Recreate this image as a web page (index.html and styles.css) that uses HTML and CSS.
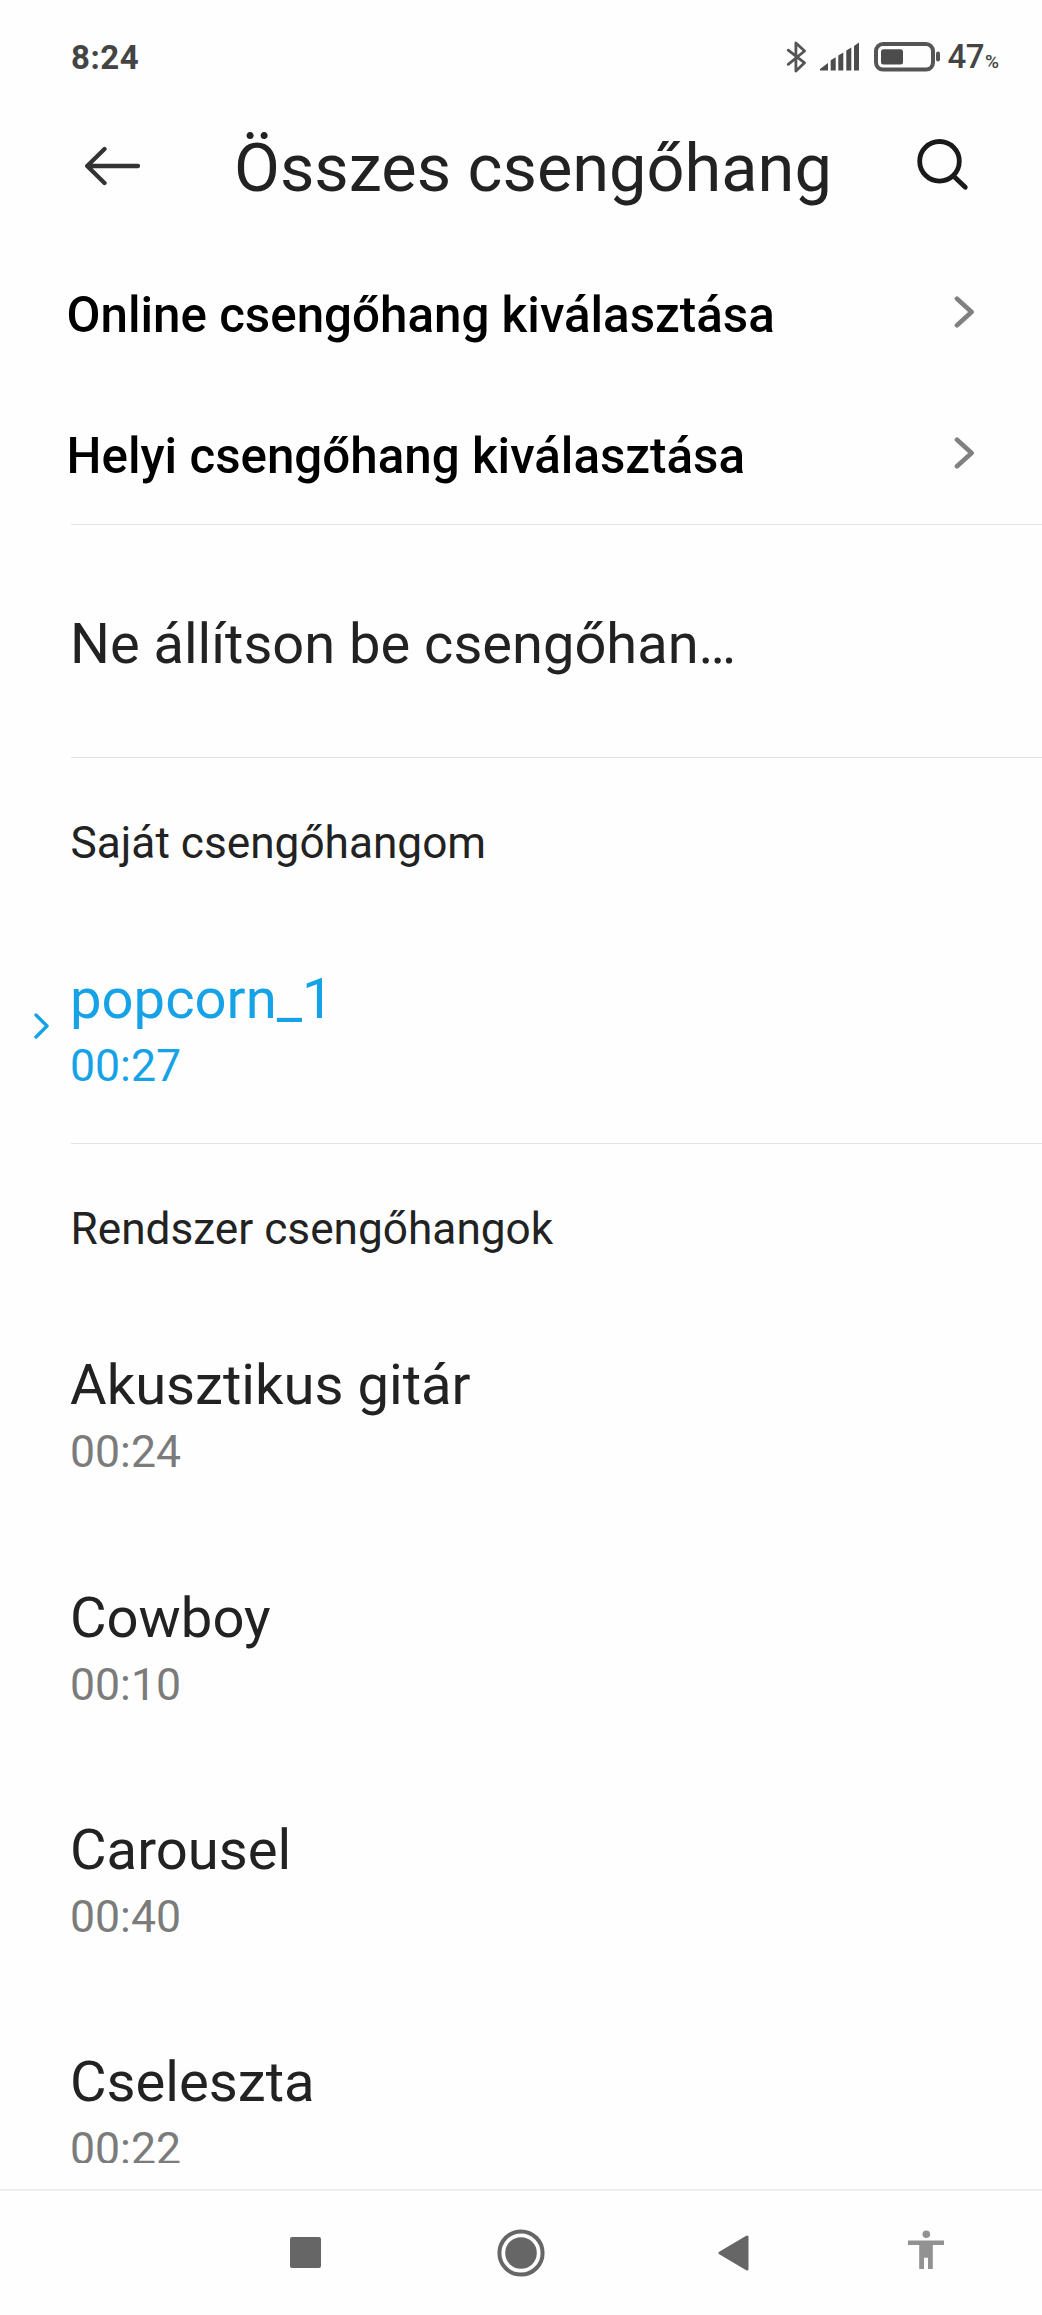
FILE: index.html
```html
<!DOCTYPE html>
<html lang="hu">
<head>
<meta charset="utf-8">
<title>Összes csengőhang</title>
<link rel="stylesheet" href="styles.css">
</head>
<body>
<div class="screen">
  <div class="status">
    <span class="clock">8:24</span>
    <div class="indicators">
      <svg class="bluetooth" width="22" height="34" viewBox="0 0 22 34" fill="none"><path d="M2.2 10.2 L18.6 22.8 L9.9 31 V3 L18.6 11 L2.2 24.3"/></svg>
      <svg class="signal" width="40" height="30" viewBox="0 0 40 30"><path d="M0 28.5 V27 L8 21 V28.5Z M10.7 28.5 V18.3 L15.7 15.3 V28.5Z M18.3 28.5 V13.5 L23.3 10.5 V28.5Z M26.3 28.5 V8.5 L31.3 5.5 V28.5Z M34 28.5 V4 L39 0.5 V28.5Z"/></svg>
      <svg class="battery" width="68" height="30" viewBox="0 0 68 30"><rect x="2" y="2" width="57" height="25.6" rx="7" fill="none" stroke="#555" stroke-width="4"/><rect x="7" y="7.3" width="22" height="15.3" rx="2.5" fill="#4c4c4c"/><rect x="62" y="9.5" width="4" height="10" rx="2" fill="#555"/></svg>
      <span class="level">47</span><span class="percent">%</span>
    </div>
  </div>

  <header class="appbar">
    <svg class="back" width="56" height="40" viewBox="0 0 56 40"><path d="M19.5 3 L2.2 20 L19.5 37 M2.2 20 H53"/></svg>
    <h1>Összes csengőhang</h1>
    <svg class="search" width="52" height="52" viewBox="0 0 52 52"><circle cx="22.5" cy="22.3" r="19.8"/><path d="M37 37.5 L48.3 48.3"/></svg>
  </header>

  <main class="content">
    <nav class="links">
      <a class="link">Online csengőhang kiválasztása<svg width="22" height="32" viewBox="0 0 22 32"><path d="M3 2.8 L17.6 16 L3 29.2"/></svg></a>
      <a class="link">Helyi csengőhang kiválasztása<svg width="22" height="32" viewBox="0 0 22 32"><path d="M3 2.8 L17.6 16 L3 29.2"/></svg></a>
    </nav>
    <div class="divider"></div>
    <div class="none">Ne állítson be csengőhan…</div>
    <div class="divider"></div>
    <h2>Saját csengőhangom</h2>
    <div class="tone selected">
      <svg class="marker" width="16" height="26" viewBox="0 0 16 26"><path d="M2 2 L13 13 L2 24"/></svg>
      <div class="name">popcorn_1</div><div class="time">00:27</div>
    </div>
    <div class="divider"></div>
    <h2>Rendszer csengőhangok</h2>
    <div class="tone"><div class="name">Akusztikus gitár</div><div class="time">00:24</div></div>
    <div class="tone"><div class="name">Cowboy</div><div class="time">00:10</div></div>
    <div class="tone"><div class="name">Carousel</div><div class="time">00:40</div></div>
    <div class="tone"><div class="name">Cseleszta</div><div class="time">00:22</div></div>
  </main>

  <footer class="navbar">
    <div class="key"><svg width="31" height="31" viewBox="0 0 31 31"><rect width="31" height="31" rx="2"/></svg></div>
    <div class="key"><svg width="48" height="48" viewBox="0 0 48 48"><circle cx="24" cy="24" r="21.6" fill="none" stroke="#666" stroke-width="4"/><circle cx="24" cy="24" r="15.8"/></svg></div>
    <div class="key back-key"><svg width="34" height="36" viewBox="0 0 34 36"><path d="M3 18 L30 2 V34Z" stroke="#666" stroke-width="3" stroke-linejoin="round"/></svg></div>
    <div class="key access"><svg width="36" height="40" viewBox="0 0 36 40"><circle cx="18.3" cy="4.3" r="3.8"/><path d="M0 10.5 H36 V15 H24.8 V39 H20 V27.7 H16 V39 H11.2 V15 H0Z"/></svg></div>
  </footer>
</div>
</body>
</html>
```

FILE: styles.css
```css
* { box-sizing: border-box; }
body { margin: 0; background: #fefefe; font-family: Roboto, "Noto Sans", sans-serif; color: #222; }
h1, h2 { margin: 0; font-weight: 400; }
svg { display: block; flex: none; }

.screen { width: 1042px; height: 2315px; display: flex; flex-direction: column; overflow: hidden; }

.status { height: 117px; flex: none; display: flex; align-items: center; justify-content: space-between; padding: 0 43px 0 71px; color: #444; }
.clock { font-size: 33px; font-weight: 700; letter-spacing: 0.5px; margin-bottom: 3px; }
.indicators { display: flex; align-items: center; }
.bluetooth { stroke: #555; stroke-width: 2.8; stroke-linejoin: round; stroke-linecap: round; margin: 0 12px 3px 0; }
.signal { fill: #4c4c4c; margin: 0 14px 3px 0; }
.battery { margin: 0 5px 4px 0; }
.level { font-size: 33px; font-weight: 500; line-height: 40px; margin-bottom: 3px; letter-spacing: -0.5px; }
.percent { font-size: 19px; font-weight: 500; line-height: 40px; margin: 7px 0 0 1px; }

.appbar { height: 101px; flex: none; display: flex; align-items: center; padding: 0 73px 0 85px; }
.back { fill: none; stroke: #333; stroke-width: 4.3; stroke-linecap: round; stroke-linejoin: round; margin-bottom: 4px; }
.appbar h1 { flex: 1; margin-left: 93px; font-size: 66.7px; line-height: 80px; white-space: nowrap; }
.search { fill: none; stroke: #1a1a1a; stroke-width: 4.8; stroke-linecap: round; margin-bottom: 5px; }

.content { height: 1945px; flex: none; overflow: hidden; }
.links { height: 306px; padding-top: 42px; display: flex; flex-direction: column; gap: 31px; }
.link { height: 110px; flex: none; display: flex; align-items: center; justify-content: space-between; padding: 0 66px 0 66.5px; font-size: 49.3px; font-weight: 500; color: #000; }
.link svg { fill: none; stroke: #808080; stroke-width: 4.6; stroke-linecap: round; stroke-linejoin: round; margin-bottom: 6px; }
.divider { height: 1px; margin-left: 71px; background: #e2e2e2; }
.none { height: 232px; padding: 6px 0 0 70px; font-size: 56px; line-height: 227px; }
h2 { height: 169px; padding-left: 70.5px; font-size: 44.2px; line-height: 171px; }
.tone { position: relative; height: 232.3px; padding: 35.4px 0 0 70px; }
.name { font-size: 56.2px; line-height: 74px; }
.time { font-size: 44.6px; line-height: 61.2px; color: #7b7b7b; }
.tone.selected { height: 216px; }
.selected .name, .selected .time { color: #15a2e6; }
.marker { position: absolute; left: 34px; top: 86px; fill: none; stroke: #15a2e6; stroke-width: 3.4; stroke-linecap: round; stroke-linejoin: round; }

.navbar { height: 126px; flex: none; margin-top: auto; border-top: 2px solid #eee; padding: 0 0 1px 197.5px; display: flex; align-items: center; }
.key { width: 215.5px; display: flex; justify-content: center; fill: #666; }
.back-key { padding-right: 4px; }
.key.access { width: 164.5px; fill: #929292; padding-bottom: 5px; }
```
